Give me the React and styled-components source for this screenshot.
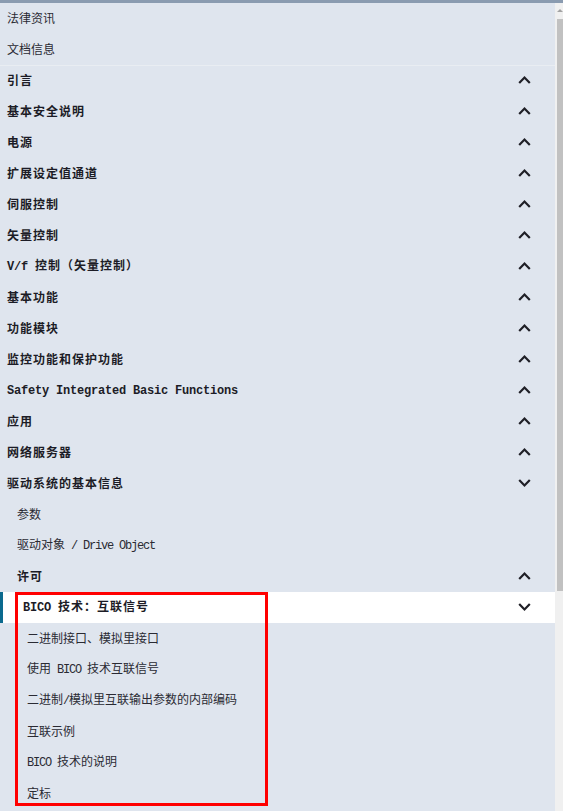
import React from "react";
import styled, { createGlobalStyle } from "styled-components";

const GlobalStyle = createGlobalStyle`
  html, body {
    margin: 0;
    padding: 0;
    background: #dfe5ee;
  }
  * {
    box-sizing: border-box;
  }
`;

const NAV = [
  { text: "法律资讯", level: 0 },
  { text: "文档信息", level: 0 },
  { text: "引言", level: 0, bold: true, icon: "up", divider: true },
  { text: "基本安全说明", level: 0, bold: true, icon: "up" },
  { text: "电源", level: 0, bold: true, icon: "up" },
  { text: "扩展设定值通道", level: 0, bold: true, icon: "up" },
  { text: "伺服控制", level: 0, bold: true, icon: "up" },
  { text: "矢量控制", level: 0, bold: true, icon: "up" },
  { text: "V/f 控制（矢量控制）", level: 0, bold: true, icon: "up" },
  { text: "基本功能", level: 0, bold: true, icon: "up" },
  { text: "功能模块", level: 0, bold: true, icon: "up" },
  { text: "监控功能和保护功能", level: 0, bold: true, icon: "up" },
  { text: "Safety Integrated Basic Functions", level: 0, bold: true, icon: "up" },
  { text: "应用", level: 0, bold: true, icon: "up" },
  { text: "网络服务器", level: 0, bold: true, icon: "up" },
  { text: "驱动系统的基本信息", level: 0, bold: true, icon: "down" },
  { text: "参数", level: 1 },
  { text: "驱动对象 / Drive Object", level: 1 },
  { text: "许可", level: 1, bold: true, icon: "up" },
];

const BICO = [
  "二进制接口、模拟里接口",
  "使用 BICO 技术互联信号",
  "二进制/模拟里互联输出参数的内部编码",
  "互联示例",
  "BICO 技术的说明",
  "定标",
];

// ascii runs get the narrow monospace, the rest stays CJK
const withLatin = (text, bold) =>
  text.split(/([\x20-\x7e]+)/).map((part, i) =>
    /^[\x20-\x7e]+$/.test(part) ? (
      <Latin key={i} $bold={bold}>
        {part}
      </Latin>
    ) : (
      part
    )
  );

const Chevron = ({ dir }) => (
  <ChevronSvg viewBox="0 0 13 8" width="13" height="8">
    <polyline
      points={dir === "up" ? "1.2,7 6.5,1.6 11.8,7" : "1.2,1 6.5,6.4 11.8,1"}
      fill="none"
      stroke="#1f1f26"
      strokeWidth="2.2"
    />
  </ChevronSvg>
);

const NavRow = ({ item }) => (
  <Row $level={item.level} $divider={item.divider}>
    <Label $bold={item.bold}>{withLatin(item.text, item.bold)}</Label>
    {item.icon && <Chevron dir={item.icon} />}
  </Row>
);

const App = () => {
  return (
    <>
      <GlobalStyle />
      <Page>
        <TopBar />
        <Body>
          <Nav>
            {NAV.map((item) => (
              <NavRow key={item.text} item={item} />
            ))}
            <Section>
              <ActiveRow $level={1}>
                <Label $bold>{withLatin("BICO 技术：互联信号", true)}</Label>
                <Chevron dir="down" />
              </ActiveRow>
              {BICO.map((t) => (
                <Row key={t} $level={2}>
                  <Label>{withLatin(t)}</Label>
                </Row>
              ))}
              <Highlight />
            </Section>
          </Nav>
          <Scrollbar>
            <ScrollArrow />
            <Thumb />
          </Scrollbar>
        </Body>
      </Page>
    </>
  );
};

const Page = styled.div`
  width: 563px;
  height: 811px;
  overflow: hidden;
  display: flex;
  flex-direction: column;
  background: #dfe5ee;
`;

const TopBar = styled.div`
  height: 3px;
  flex: none;
  background: #8a9bb0;
`;

const Body = styled.div`
  flex: 1;
  display: flex;
  min-height: 0;
`;

const Nav = styled.div`
  flex: 1;
  display: flex;
  flex-direction: column;
`;

const Row = styled.div`
  height: 31px;
  flex: none;
  display: flex;
  align-items: center;
  justify-content: space-between;
  padding: 0 24px 2px ${(p) => 7 + p.$level * 10}px;
  border-top: ${(p) => (p.$divider ? "1px solid #e9edf2" : "none")};
  color: #24242c;
`;

const ActiveRow = styled(Row)`
  background: #ffffff;
  border-left: 3px solid #0b6a8e;
  padding-left: 20px;
`;

const Label = styled.span`
  font-family: "Noto Sans CJK SC", "Noto Sans", sans-serif;
  font-size: 12px;
  line-height: 14px;
  font-weight: ${(p) => (p.$bold ? 700 : 400)};
  letter-spacing: ${(p) => (p.$bold ? "1px" : "0")};
  white-space: pre;
  color: ${(p) => (p.$bold ? "#1c1c26" : "#2a2a33")};
`;

const Latin = styled.span`
  font-family: "Liberation Mono", "DejaVu Sans Mono", monospace;
  font-size: 12px;
  letter-spacing: ${(p) => (p.$bold ? "-0.2px" : "-1.2px")};
`;

const ChevronSvg = styled.svg`
  flex: none;
  display: block;
`;

const Section = styled.div`
  position: relative;
  display: flex;
  flex-direction: column;
`;

const Highlight = styled.div`
  position: absolute;
  left: 15px;
  top: 0;
  width: 253px;
  height: 214px;
  border: 3px solid #ff0000;
  pointer-events: none;
`;

const Scrollbar = styled.div`
  width: 8px;
  flex: none;
  background: #f0f0f0;
  display: flex;
  flex-direction: column;
  align-items: flex-end;
  padding-top: 6px;
`;

const ScrollArrow = styled.div`
  width: 0;
  height: 0;
  border-left: 3px solid transparent;
  border-right: 3px solid transparent;
  border-bottom: 3px solid #a3a3a3;
`;

const Thumb = styled.div`
  width: 6px;
  height: 572px;
  margin-top: 7px;
  background: #c1c1c1;
`;

export default App;
